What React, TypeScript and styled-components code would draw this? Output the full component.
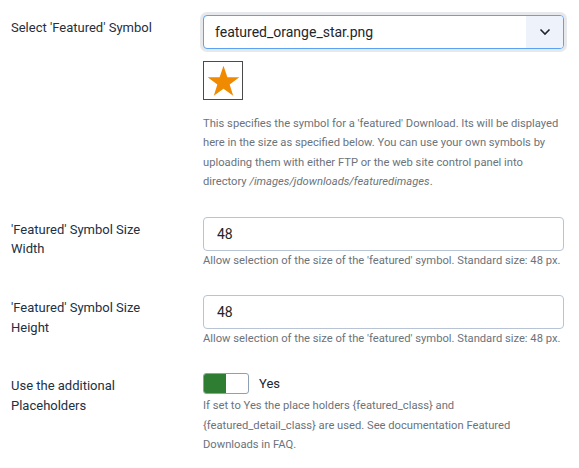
import React from "react";
import styled, { createGlobalStyle } from "styled-components";

const GlobalStyle = createGlobalStyle`
    html, body {
        margin: 0;
        padding: 0;
        background: #ffffff;
        font-family: Roboto, "Liberation Sans", Arial, sans-serif;
    }
`;

const Form = styled.div`
    padding: 15px 0 0 11px;
    display: flex;
    flex-direction: column;
    gap: 25px;
`;

const Row = styled.div`
    display: grid;
    grid-template-columns: 192px 361px;
    align-items: start;
`;

const Label = styled.div`
    padding-top: 3px;
    font-size: 13px;
    line-height: 19.5px;
    color: #22303f;
    padding-right: 30px;
`;

const Control = styled.div`
    display: flex;
    flex-direction: column;
`;

const SelectBox = styled.div`
    height: 34px;
    box-sizing: border-box;
    border: 1px solid #5aa2f2;
    border-radius: 4px;
    box-shadow: 0 0 0 3px #e6e8eb;
    display: flex;
    align-items: stretch;
    overflow: hidden;
    background: #ffffff;
`;

const SelectValue = styled.div`
    flex: 1;
    display: flex;
    align-items: center;
    padding-left: 11px;
    font-size: 14px;
    color: #22262a;
`;

const SelectArrow = styled.div`
    width: 37px;
    background: #eef3fb;
    display: flex;
    align-items: center;
    justify-content: center;
`;

const Preview = styled.div`
    margin-top: 12px;
    width: 40px;
    height: 39px;
    box-sizing: border-box;
    border: 1px solid #4a4a4a;
    display: flex;
    align-items: center;
    justify-content: center;
`;

const Help = styled.div<{ $top?: number }>`
    margin-top: ${(p) => p.$top ?? 0}px;
    font-size: 11.2px;
    line-height: 19.4px;
    color: #6b737b;

    em {
        font-style: italic;
    }
`;

const TextInput = styled.div`
    height: 34px;
    box-sizing: border-box;
    border: 1px solid #b8c3d6;
    border-radius: 4px;
    display: flex;
    align-items: center;
    padding-left: 13px;
    font-size: 14px;
    color: #22262a;
`;

const SwitchLine = styled.div`
    display: flex;
    align-items: center;
    gap: 10px;
    height: 21px;
`;

const Switch = styled.div`
    width: 46px;
    height: 21px;
    box-sizing: border-box;
    border: 1px solid #8fa0b2;
    border-radius: 3px;
    overflow: hidden;
    display: flex;
`;

const SwitchOn = styled.div`
    width: 50%;
    background: #2e7d32;
`;

const SwitchText = styled.span`
    font-size: 13px;
    color: #22262a;
`;

const Chevron = () => (
    <svg width="12" height="8" viewBox="0 0 12 8">
        <path d="M1.5 1.5 L6 6 L10.5 1.5" fill="none" stroke="#22262a" strokeWidth="1.6" />
    </svg>
);

const Star = () => (
    <svg width="33" height="32" viewBox="0 0 100 96">
        <polygon
            points="50,2 61.8,36.6 98,36.6 68.6,58.4 79.4,93 50,71.8 20.6,93 31.4,58.4 2,36.6 38.2,36.6"
            fill="#f08a00"
        />
    </svg>
);

const sizeHelp = "Allow selection of the size of the 'featured' symbol. Standard size: 48 px.";

export default function App() {
    return (
        <>
            <GlobalStyle />
            <Form>
                <Row>
                    <Label>Select 'Featured' Symbol</Label>
                    <Control>
                        <SelectBox>
                            <SelectValue>featured_orange_star.png</SelectValue>
                            <SelectArrow>
                                <Chevron />
                            </SelectArrow>
                        </SelectBox>
                        <Preview>
                            <Star />
                        </Preview>
                        <Help $top={14}>
                            This specifies the symbol for a 'featured' Download. Its will be displayed here in the
                            size as specified below. You can use your own symbols by uploading them with either FTP
                            or the web site control panel into directory <em>/images/jdownloads/featuredimages</em>.
                        </Help>
                    </Control>
                </Row>
                <Row>
                    <Label>'Featured' Symbol Size Width</Label>
                    <Control>
                        <TextInput>48</TextInput>
                        <Help>{sizeHelp}</Help>
                    </Control>
                </Row>
                <Row>
                    <Label>'Featured' Symbol Size Height</Label>
                    <Control>
                        <TextInput>48</TextInput>
                        <Help>{sizeHelp}</Help>
                    </Control>
                </Row>
                <Row>
                    <Label>Use the additional Placeholders</Label>
                    <Control>
                        <SwitchLine>
                            <Switch>
                                <SwitchOn />
                            </Switch>
                            <SwitchText>Yes</SwitchText>
                        </SwitchLine>
                        <Help $top={2}>
                            If set to Yes the place holders {"{featured_class}"} and {"{featured_detail_class}"} are
                            used. See documentation Featured Downloads in FAQ.
                        </Help>
                    </Control>
                </Row>
            </Form>
        </>
    );
}
